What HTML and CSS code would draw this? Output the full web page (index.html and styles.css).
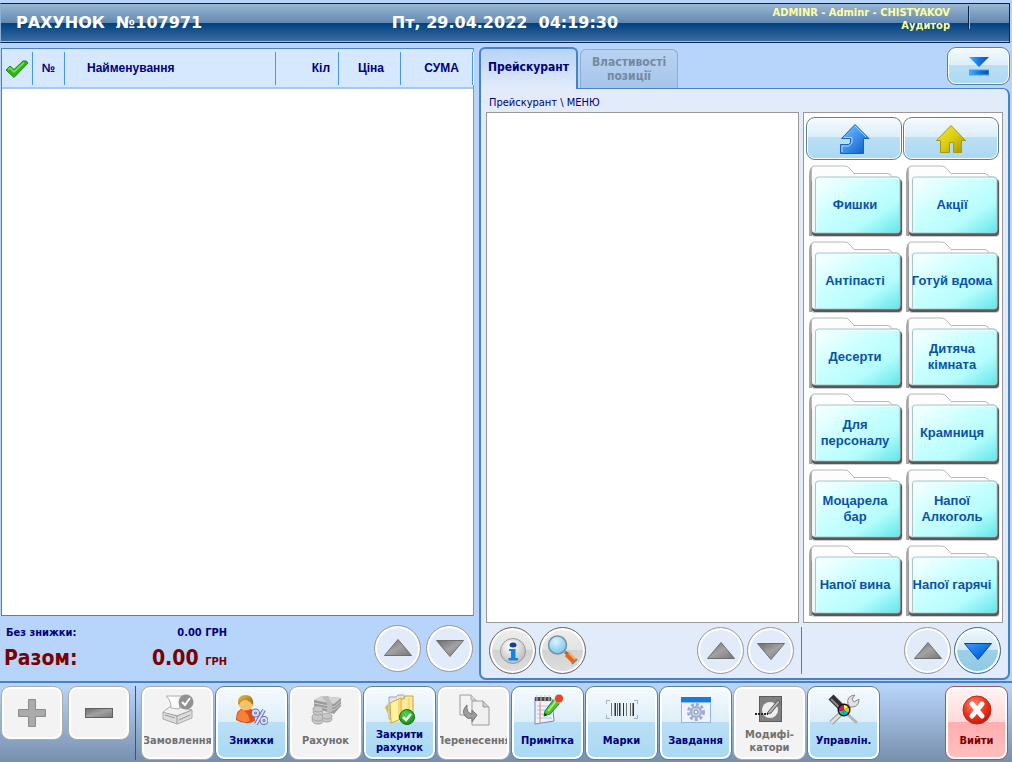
FILE: index.html
```
<!DOCTYPE html>
<html lang="uk">
<head>
<meta charset="utf-8">
<title>Рахунок №107971</title>
<link rel="stylesheet" href="styles.css">
</head>
<body>
<svg class="sprite" aria-hidden="true">
  <defs>
    <linearGradient id="g-gray" x1="0" y1="0" x2="1" y2="1"><stop offset="0" stop-color="#6c6c6c"/><stop offset=".5" stop-color="#a2a2a2"/><stop offset="1" stop-color="#777"/></linearGradient>
    <linearGradient id="g-blue" x1="0" y1="0" x2="1" y2="1"><stop offset="0" stop-color="#3a9cf6"/><stop offset=".6" stop-color="#0b6fe0"/><stop offset="1" stop-color="#0a4fb8"/></linearGradient>
    <linearGradient id="g-bar" x1="0" y1="0" x2="1" y2="0"><stop offset="0" stop-color="#49b4fb"/><stop offset=".5" stop-color="#1178e8"/><stop offset="1" stop-color="#064fc0"/></linearGradient>
    <linearGradient id="g-up" x1="0" y1="0" x2="1" y2="1"><stop offset="0" stop-color="#8cc6ff"/><stop offset=".5" stop-color="#3d92ee"/><stop offset="1" stop-color="#0b55bd"/></linearGradient>
    <linearGradient id="g-home" x1="0" y1="0" x2="1" y2="1"><stop offset="0" stop-color="#f2ea3c"/><stop offset=".5" stop-color="#dccd12"/><stop offset="1" stop-color="#a39300"/></linearGradient>
    <linearGradient id="g-folder" x1="0" y1="0" x2="1" y2="1"><stop offset="0" stop-color="#fff"/><stop offset=".4" stop-color="#ccffff"/><stop offset=".7" stop-color="#b6fdfd"/><stop offset="1" stop-color="#5fe6ea"/></linearGradient>
    <radialGradient id="g-red" cx=".4" cy=".3" r=".8"><stop offset="0" stop-color="#ff8a72"/><stop offset=".5" stop-color="#ee3a22"/><stop offset="1" stop-color="#b90f05"/></radialGradient>
    <radialGradient id="g-green" cx=".4" cy=".3" r=".8"><stop offset="0" stop-color="#5fd050"/><stop offset="1" stop-color="#0b8a14"/></radialGradient>
    <radialGradient id="g-ball" cx=".4" cy=".3" r=".8"><stop offset="0" stop-color="#fff"/><stop offset="1" stop-color="#b4b4b4"/></radialGradient>
    <radialGradient id="g-glass" cx=".4" cy=".3" r=".8"><stop offset="0" stop-color="#d8f5ff"/><stop offset="1" stop-color="#6fbfe6"/></radialGradient>
    <linearGradient id="g-hair" x1="0" y1="0" x2="1" y2="1"><stop offset="0" stop-color="#e8b840"/><stop offset="1" stop-color="#9a6a10"/></linearGradient>
  </defs>
  <symbol id="up" viewBox="0 0 30 20"><path d="M15 1.500 28.500 17.500H1.500Z" fill="url(#g-gray)" stroke="#6d6d6d"/></symbol>
  <symbol id="down" viewBox="0 0 30 20"><path d="M1.500 2.500H28.500L15 18.500Z" fill="url(#g-gray)" stroke="#6d6d6d"/></symbol>
  <symbol id="down-blue" viewBox="0 0 30 20"><path d="M1.500 2.500H28.500L15 18.500Z" fill="url(#g-blue)" stroke="#0a3fa6"/></symbol>
  <symbol id="folder" viewBox="0 0 94 73">
    <path d="M0 71V12Q0 2 3 2V71Z" fill="#a8a8a8"/>
    <path d="M2.500 69V4Q2.500 1 5 1H36Q39 1 41 4L45 8.500H79Q82 9 83 12H88V68Z" fill="#fdfdfd" stroke="#b8b8b8"/>
    <rect x="2" y="14" width="91.500" height="58" rx="4" fill="#000" opacity=".2"/>
    <rect x="3" y="14" width="90" height="57" rx="4" fill="#444" opacity=".85"/>
    <path d="M3 12V65Q3 68 6 68H12V12Z" fill="#f6f8f8"/>
    <path d="M9 12H88Q91 12 91 15V65Q91 68 88 68H5Q7 67 6.500 64V15Q6.500 12 9 12Z" fill="url(#g-folder)" stroke="#a9c4c6"/>
    <path d="M8 66V16Q8 13.500 11 13.500H88" fill="none" stroke="#e6ffff"/>
    <path d="M5 68.500H88" stroke="#279d9f"/>
  </symbol>
</svg>

<header class="topbar">
  <h1 class="topbar-title">РАХУНОК&nbsp; №107971</h1>
  <time class="topbar-time">Пт, 29.04.2022&nbsp; 04:19:30</time>
  <div class="topbar-user">ADMINR - Adminr - CHISTYAKOV<br>Аудитор</div>
</header>

<main class="workspace">
  <section class="bill">
    <div class="bill-list">
      <table class="bill-table">
        <thead>
          <tr>
            <th class="col-check"><span class="cell"><svg class="check" viewBox="0 0 24 18" role="img" aria-label="Вибрано"><path d="M1 10 5 6 9 9.500 18 1Q22 0 23 3L9 17.500Z" fill="#2fb51c" stroke="#1c8a12"/><path d="M3 9.500 5 8 9 12 19 2.500" fill="none" stroke="#7fe060" stroke-width="1.500"/></svg></span></th>
            <th class="col-num"><span class="cell">№</span></th>
            <th class="col-name"><span class="cell">Найменування</span></th>
            <th class="col-qty"><span class="cell">Кіл</span></th>
            <th class="col-price"><span class="cell">Ціна</span></th>
            <th class="col-sum"><span class="cell">СУМА</span></th>
          </tr>
        </thead>
      </table>
    </div>
    <div class="totals">
      <dl class="totals-list">
        <dt class="subtotal">Без знижки:</dt><dd class="subtotal">0.00 ГРН</dd>
        <dt class="total">Разом:</dt><dd class="total">0.00 <small class="currency">ГРН</small></dd>
      </dl>
      <button class="round" aria-label="Вгору"><svg class="arrow"><use href="#up"/></svg></button>
      <button class="round" aria-label="Вниз"><svg class="arrow"><use href="#down"/></svg></button>
    </div>
  </section>

  <section class="catalog">
    <div class="tabs">
      <button class="tab tab-active">Прейскурант</button>
      <button class="tab" disabled>Властивості позиції</button>
      <button class="collapse" aria-label="Згорнути"><svg class="collapse-icon" viewBox="0 0 20 20"><path d="M0 1H20L10 11Z" fill="url(#g-bar)"/><rect y="14" width="20" height="5" fill="url(#g-bar)" stroke="#5b9ad8"/></svg></button>
    </div>
    <div class="catalog-panel">
      <div class="crumbs">Прейскурант \ МЕНЮ</div>
      <div class="catalog-body">
        <div class="items"></div>
        <div class="groups">
          <button class="nav" aria-label="Рівень вище"><svg class="nav-icon" viewBox="0 0 32 32"><path d="M17 1.500 31 15.500H25.500V30.500H2.500V21.500H10.500L12.500 19.500V15.500H3.500Z" fill="url(#g-up)" stroke="#1e62b8"/><path d="M17 3 28 14M4 29V23H11L14 20V14.500H6" fill="none" stroke="#a8d6ff"/></svg></button>
          <button class="nav" aria-label="Початок"><svg class="nav-icon" viewBox="0 0 32 32"><path d="M16 2.500 30.500 17.500H26.500V29.500H18.500V19.500H14.500V29.500H5.500V17.500H1.500Z" fill="url(#g-home)" stroke="#a59a10"/></svg></button>
          <button class="folder"><svg class="folder-art"><use href="#folder"/></svg><span class="folder-name">Фишки</span></button>
          <button class="folder"><svg class="folder-art"><use href="#folder"/></svg><span class="folder-name">Акції</span></button>
          <button class="folder"><svg class="folder-art"><use href="#folder"/></svg><span class="folder-name">Антіпасті</span></button>
          <button class="folder"><svg class="folder-art"><use href="#folder"/></svg><span class="folder-name">Готуй вдома</span></button>
          <button class="folder"><svg class="folder-art"><use href="#folder"/></svg><span class="folder-name">Десерти</span></button>
          <button class="folder"><svg class="folder-art"><use href="#folder"/></svg><span class="folder-name">Дитяча<br>кімната</span></button>
          <button class="folder"><svg class="folder-art"><use href="#folder"/></svg><span class="folder-name">Для<br>персоналу</span></button>
          <button class="folder"><svg class="folder-art"><use href="#folder"/></svg><span class="folder-name">Крамниця</span></button>
          <button class="folder"><svg class="folder-art"><use href="#folder"/></svg><span class="folder-name">Моцарела<br>бар</span></button>
          <button class="folder"><svg class="folder-art"><use href="#folder"/></svg><span class="folder-name">Напої<br>Алкоголь</span></button>
          <button class="folder"><svg class="folder-art"><use href="#folder"/></svg><span class="folder-name">Напої вина</span></button>
          <button class="folder"><svg class="folder-art"><use href="#folder"/></svg><span class="folder-name">Напої гарячі</span></button>
        </div>
      </div>
      <div class="catalog-actions">
        <div class="item-actions">
          <button class="round round-gray" aria-label="Інформація"><svg class="round-icon" viewBox="0 0 32 32"><circle cx="16" cy="16" r="12.500" fill="url(#g-ball)" stroke="#999"/><ellipse cx="16" cy="10" rx="3.500" ry="2.500" fill="#123f9c"/><path d="M12 14H18.500V23H21V25.500H11.500V23H14V16H12Z" fill="#1283e8"/></svg></button>
          <button class="round round-gray" aria-label="Пошук"><svg class="round-icon" viewBox="0 0 32 32"><path d="M18 17 22 20" stroke="#777" stroke-width="3"/><path d="M20 19 28 27" stroke="#e86612" stroke-width="6"/><path d="M22 18 29 25" stroke="#ffae5c" stroke-width="2"/><path d="M25 29 30 24" stroke="#9a8478" stroke-width="2"/><circle cx="10.500" cy="10" r="9" fill="url(#g-glass)" stroke="#7890a0" stroke-width="1.500"/></svg></button>
          <span class="spacer"></span>
          <button class="round" aria-label="Товари вгору"><svg class="arrow"><use href="#up"/></svg></button>
          <button class="round" aria-label="Товари вниз"><svg class="arrow"><use href="#down"/></svg></button>
        </div>
        <div class="group-actions">
          <button class="round" aria-label="Групи вгору"><svg class="arrow"><use href="#up"/></svg></button>
          <button class="round round-blue" aria-label="Групи вниз"><svg class="arrow"><use href="#down-blue"/></svg></button>
        </div>
      </div>
    </div>
  </section>
</main>

<footer class="toolbar">
  <button class="tool tool-short" disabled aria-label="Додати"><svg class="tool-icon" viewBox="0 0 32 32"><path d="M12.500 2.500H19.500V12.500H29.500V19.500H19.500V29.500H12.500V19.500H2.500V12.500H12.500Z" fill="#aaa" stroke="#8c8c8c"/></svg></button>
  <button class="tool tool-short" disabled aria-label="Відняти"><svg class="tool-icon" viewBox="0 0 32 32"><rect x="2.500" y="11.500" width="27" height="9" fill="url(#g-gray)" stroke="#606060"/></svg></button>
  <div class="tool-group">
    <button class="tool" disabled><svg class="tool-icon" viewBox="0 0 32 32"><path d="M1 18 9 12 30 16V24L15 30 1 25Z" fill="#dcdcdc" stroke="#aaa"/><path d="M1 18 15 22 30 16M15 22V30M3 21 13 24M17 26 28 21" fill="none" stroke="#999"/><path d="M1.500 18 9 13 28 16 15 21Z" fill="#f0f0f0"/><path d="M4 2H21L17 15 9 14Q9 6 4 2Z" fill="#fafafa" stroke="#b0b0b0"/><circle cx="24" cy="8" r="7.500" fill="#929292"/><path d="M20 8 23 11 28 4" fill="none" stroke="#fff" stroke-width="2"/></svg><span class="tool-name">Замовлення</span></button>
    <button class="tool"><svg class="tool-icon" viewBox="0 0 32 32"><path d="M0 26Q0 15 8 14H13Q19 16 19 27Q10 32 0 26Z" fill="#e04c14"/><path d="M1 25Q1 17 7 15L12 21 14 27Q8 30 1 25Z" fill="#f4803a"/><circle cx="10" cy="9" r="7.500" fill="#fbc06a"/><path d="M2 10Q1 1 10 1Q18 1 17 11Q14 7 10 6Q5 6 3 11Z" fill="url(#g-hair)"/><g fill="none" stroke="#6a6fb0" stroke-width="4"><circle cx="19.500" cy="19" r="2.500"/><circle cx="28" cy="26.500" r="2.500"/><path d="M28 16 20 30"/></g><g fill="none" stroke="#d8e0fc" stroke-width="2"><circle cx="19.500" cy="19" r="2.500"/><circle cx="28" cy="26.500" r="2.500"/><path d="M28 16 20 30"/></g></svg><span class="tool-name">Знижки</span></button>
    <button class="tool" disabled><svg class="tool-icon" viewBox="0 0 32 32"><path d="M4 6 12 2 31 4V12L24 20 4 14Z" fill="#9b9b9b"/><path d="M4 6 12 2 31 4 24 10Z" fill="#d4d4d4"/><path d="M4 9 24 13 31 7M4 12 24 16 31 10" fill="none" stroke="#ccc"/><path d="M12 3 17 9V18H22V10L18 2Z" fill="#bcbcbc"/><g fill="#c8c8c8" stroke="#a4a4a4"><ellipse cx="8" cy="26" rx="6" ry="4"/><ellipse cx="8" cy="23" rx="6" ry="4"/><ellipse cx="8" cy="18" rx="5" ry="3"/><ellipse cx="8" cy="15" rx="5" ry="3"/><ellipse cx="17" cy="25" rx="5" ry="3"/><ellipse cx="17" cy="22" rx="5" ry="3"/></g></svg><span class="tool-name">Рахунок</span></button>
    <button class="tool"><svg class="tool-icon" viewBox="0 0 32 32"><path d="M5 3H12L14 1H20V25H5Z" fill="#dfe6ee" stroke="#9aa8b4"/><path d="M1 13 4 10V20Z" fill="#e8b828"/><path d="M16 5H20L21 2H29V25H12V6Z" fill="#fbe9a0" stroke="#cfa52c"/><path d="M6 9 17 4V25L7 29Z" fill="#fff3a4" stroke="#d9a91c"/><path d="M15 6V25M25 4V22" stroke="#f6dc70" stroke-width="2"/><circle cx="23" cy="23" r="7.500" fill="url(#g-green)" stroke="#0b7512"/><path d="M19 23 22 26 27 20" fill="none" stroke="#fff" stroke-width="2.500"/></svg><span class="tool-name">Закрити<br>рахунок</span></button>
    <button class="tool" disabled><svg class="tool-icon" viewBox="0 0 32 32"><path d="M2 1H13L18 6V21H2Z" fill="#f3f3f3" stroke="#9c9c9c"/><path d="M13 1V6H18" fill="#ddd" stroke="#aaa"/><path d="M14 7H25L31 13V31H14Z" fill="#f0f0f0" stroke="#9c9c9c"/><path d="M25 7V13H31" fill="#ccc" stroke="#9c9c9c"/><path d="M9 11Q3 17 7 22Q10 26 14 24V28L19 21 14 16V20Q8 19 9 11Z" fill="#9d9d9d" stroke="#777"/></svg><span class="tool-name">Перенесення</span></button>
    <button class="tool"><svg class="tool-icon" viewBox="0 0 32 32"><path d="M3 4 20 5 22 27 3 30Z" fill="#eef3ff" stroke="#7c86c8"/><path d="M5 12H20M5 16H20M5 20H20M5 24H20" stroke="#a8c8f0"/><path d="M8 8V29" stroke="#f08060"/><path d="M3 3H19V7H3Z" fill="#4a4a4a"/><path d="M5 1V8M9 1V8M13 1V8M17 1V8" stroke="#c8c8c8"/><path d="M13 17 22 5 28 9 18 20 12 22Z" fill="#55c330" stroke="#24821a"/><path d="M16 17 24 7" stroke="#a4f080" stroke-width="2"/><path d="M21 6 23 3 30 7 28 10Z" fill="#ccc"/><circle cx="27" cy="4.500" r="4" fill="#e44628"/><path d="M12 22 13 19 15 21Z" fill="#222"/></svg><span class="tool-name">Примітка</span></button>
    <button class="tool"><svg class="tool-icon" viewBox="0 0 32 32"><path d="M4 6.500H.500V10M28 6.500H31.500V10M4 24.500H.500V21M28 24.500H31.500V21" fill="none" stroke="#a4b0b6"/><path d="M5.500 9V22M20.500 9V22" stroke="#777"/><path d="M9.500 9V22M13.500 9V22M17.500 9V22M27.500 9V22" stroke="#333"/><path d="M8.500 9V22M14.500 9V22M26.500 9V22" stroke="#8a8f92"/><path d="M11.500 9V22M24.500 9V22" stroke="#666"/></svg><span class="tool-name">Марки</span></button>
    <button class="tool"><svg class="tool-icon" viewBox="0 0 32 32"><rect x="1.500" y="3.500" width="29" height="25" fill="#eef3fc" stroke="#94b8e0"/><rect x="1" y="3" width="30" height="5" fill="#1c78dc"/><path d="M1 8.500H31" stroke="#82c0ff"/><circle cx="16" cy="18" r="7.500" fill="none" stroke="#a0acd0" stroke-width="3" stroke-dasharray="3 2"/><circle cx="16" cy="18" r="5" fill="#cad4ec" stroke="#a0accc" stroke-width="2"/><circle cx="16" cy="18" r="2" fill="#fff" stroke="#7888b0"/></svg><span class="tool-name">Завдання</span></button>
    <button class="tool" disabled><svg class="tool-icon" viewBox="0 0 32 32"><rect x="5.500" y="2.500" width="22" height="25" fill="#808080" stroke="#5c5c5c"/><circle cx="16" cy="16" r="8" fill="#eee"/><path d="M14 18 24 6 26 8 17 19 13 20Z" fill="#b5b5b5" stroke="#555"/><path d="M1 20H14" stroke="#222" stroke-width="2" stroke-dasharray="2 1"/></svg><span class="tool-name">Модифі-<br>катори</span></button>
    <button class="tool"><svg class="tool-icon" viewBox="0 0 32 32"><path d="M3 29 22 11" stroke="#989898" stroke-width="5"/><path d="M3 29 22 11" stroke="#e0e0e0" stroke-width="3"/><path d="M20 10Q18 2 27 1L24 5 26 8 31 5Q31 14 22 13Z" fill="#e2e2e2" stroke="#888"/><path d="M16 17 29 29" stroke="#b4b4b4" stroke-width="3"/><path d="M3 3 14 14" stroke="#303030" stroke-width="7"/><path d="M3 5 12 14" stroke="#888" stroke-width="2"/><circle cx="16" cy="16" r="6.500" fill="#111"/><path d="M16 16V11A5 5 0 0 1 20 13Z" fill="#ff0"/><path d="M16 16 20 13A5 5 0 0 1 20 19Z" fill="#f8b800"/><path d="M16 16 20 19A5 5 0 0 1 15 21Z" fill="#00b8ff"/><path d="M16 16 15 21A5 5 0 0 1 11 17Z" fill="#18d060"/><path d="M16 16 11 17A5 5 0 0 1 16 11Z" fill="#f00080"/></svg><span class="tool-name">Управлін.</span></button>
  </div>
  <button class="tool tool-exit"><svg class="tool-icon" viewBox="0 0 32 32"><circle cx="16" cy="16" r="14" fill="url(#g-red)" stroke="#b82b1c"/><path d="M11 10 21 22M21 10 11 22" stroke="#fff" stroke-width="5" stroke-linecap="round"/></svg><span class="tool-name">Вийти</span></button>
</footer>
</body>
</html>
```

FILE: styles.css
```
* { box-sizing: border-box; }

body {
  margin: 0;
  min-height: 100vh;
  display: flex;
  flex-direction: column;
  background: #b7d5fb;
  color: #00007b;
  font-family: "DejaVu Sans Condensed", "DejaVu Sans", sans-serif;
  font-size: 11px;
  font-weight: bold;
}

button {
  margin: 0;
  padding: 0;
  border: 0;
  background: none;
  font: inherit;
  color: inherit;
}

svg { display: block; flex: none; }

.sprite { position: absolute; width: 0; height: 0; }

/* Title bar */
.topbar {
  display: grid;
  grid-template-columns: 1fr auto 1fr;
  margin: 3px 2px 4px 0;
  padding: 0 15px;
  height: 40px;
  border: 1px solid #06264e;
  border-left-color: #8fb0d4;
  background: linear-gradient(#9bb7d3, #6288b0 19px, #00407e 19px, #3a6ba3 37px, #a0bde0 37px);
  color: #fff;
}

.topbar-title,
.topbar-time {
  margin: 0;
  font: bold 16px/38px "DejaVu Sans", sans-serif;
  white-space: nowrap;
}

.topbar-user {
  justify-self: end;
  align-self: start;
  margin: 2px 25px 0 0;
  padding-right: 18px;
  height: 23px;
  border-right: 1px solid #06264e;
  box-shadow: 1px 0 #8fb9ea;
  color: #ffff9c;
  font-size: 11px;
  line-height: 13px;
  text-align: right;
}

/* Work area */
.workspace {
  flex: 1;
  display: grid;
  grid-template-columns: 474fr 531fr;
  gap: 5px;
  padding: 0 2px 1px 0;
}

.bill { display: flex; flex-direction: column; }

.bill-list {
  flex: 1;
  margin: 1px 0 0 1px;
  border: 1px solid #4a80c4;
  border-right-color: #8b97a8;
  background: #fff;
}

.bill-table {
  width: 100%;
  table-layout: fixed;
  border-collapse: collapse;
  font: bold 12px/33px "Liberation Sans", sans-serif;
}

.bill-table th {
  padding: 3px 0 2px;
  background: #d6e8fd;
  border-bottom: 2px solid #a3c8f3;
  text-align: right;
}

.cell {
  display: block;
  height: 33px;
  padding-right: 8px;
  border-right: 1px solid #4a97e6;
  box-shadow: 1px 0 #fff;
}

.col-check { width: 31px; }
.col-num { width: 32px; }
.col-qty { width: 63px; }
.col-price { width: 62px; }
.col-sum { width: 72px; }
.col-check .cell { display: flex; align-items: center; padding: 0 0 0 3px; }
.col-num .cell { padding: 0; text-align: center; }
.col-name .cell { padding-left: 22px; text-align: left; }
.col-price .cell { padding-right: 16px; }
.col-sum .cell { padding-right: 13px; }
.check { width: 24px; height: 18px; }

.totals {
  display: flex;
  align-items: center;
  gap: 5px;
  height: 64px;
  padding: 0 1px 0 4px;
}

.totals-list {
  display: grid;
  grid-template-columns: auto auto;
  align-items: baseline;
  width: 223px;
  margin: 0 auto 0 0;
  padding-top: 3px;
}

.totals-list dd { margin: 0; text-align: right; }
.subtotal { line-height: 20px; }
dt.subtotal { padding-left: 2px; }
.total { color: #7b0000; font-size: 21px; line-height: 31px; }
.currency { font-size: 11px; }

/* Round buttons */
.round {
  display: grid;
  place-items: center;
  flex: none;
  width: 47px;
  height: 47px;
  border: 1px solid #999;
  border-radius: 50%;
  background: #e2ebfa;
  box-shadow: inset 0 0 0 2px #fff;
}

.round-gray { border-color: #666; background: linear-gradient(#eee, #e2e2e2 50%, #d2d2d2 50%, #dedede); }
.round-blue { border-color: #3c6880; background: linear-gradient(#f0f8fc, #d0e8f4 50%, #9cd0e8 50%, #90c8e4); }
.arrow { width: 30px; height: 20px; }
.round-icon { width: 32px; height: 32px; }

/* Catalog */
.catalog { display: flex; flex-direction: column; }
.tabs { display: flex; align-items: flex-end; height: 41px; }

.tab {
  width: 98px;
  height: 39px;
  margin-left: 2px;
  border: 1px solid #8cacd2;
  border-bottom: 0;
  border-radius: 6px 6px 0 0;
  background: linear-gradient(#b9d3f2, #a6c5ea);
  color: #74899f;
  font-size: 12px;
  line-height: 14px;
}

.tab-active {
  z-index: 1;
  width: 99px;
  height: 42px;
  margin: 0 0 -1px;
  padding-bottom: 5px;
  border: 2px solid #4a80c8;
  border-bottom: 0;
  background: linear-gradient(#b9d3f6, #e2ebfa);
  color: #00007b;
}

.collapse {
  display: grid;
  place-items: center;
  align-self: flex-start;
  margin-left: auto;
  width: 63px;
  height: 38px;
}

.collapse,
.nav {
  border: 1px solid #5a8096;
  border-radius: 9px;
  background: linear-gradient(#f4fafd, #dceef8 47%, #bbdff4 47%, #a9d9f3);
  box-shadow: inset 0 0 0 1px #fff;
}

.collapse-icon { width: 20px; height: 20px; }

.catalog-panel {
  flex: 1;
  display: flex;
  flex-direction: column;
  padding: 5px 5px 4px;
  border: 2px solid #4a80c8;
  border-top-width: 1px;
  border-radius: 0 7px 7px 7px;
  background: #e2ebfa;
}

.crumbs {
  padding: 0 0 1px 3px;
  font-size: 11px;
  font-weight: normal;
  line-height: 17px;
}

.catalog-body { flex: 1; display: flex; gap: 4px; }
.items { flex: 1; border: 1px solid #999; background: #fff; }

.groups {
  display: grid;
  grid-template-columns: 1fr 1fr;
  align-content: start;
  width: 200px;
  padding: 4px 2px 0;
  border: 1px solid #999;
  background: #fff;
}

.nav {
  display: grid;
  place-items: center;
  height: 43px;
  margin: 0 1px 5px 0;
}

.nav-icon { width: 32px; height: 32px; }

.folder {
  display: grid;
  place-items: center;
  height: 76px;
  padding: 0 0 3px 3px;
  color: #0a52a8;
  font: bold 13px/16px "Liberation Sans", sans-serif;
}

.folder-art, .folder-name { grid-area: 1 / 1; }
.folder-art { width: 94px; height: 73px; }
.folder-name { padding: 6px 2px 0 0; white-space: nowrap; }

.catalog-actions { display: flex; padding-top: 4px; }

.item-actions {
  flex: 1;
  display: flex;
  gap: 3px;
  padding: 0 7px 0 3px;
  border-right: 1px solid #777;
}

.spacer { flex: 1; }

.group-actions {
  display: flex;
  justify-content: flex-end;
  gap: 3px;
  width: 201px;
  padding-right: 2px;
}

/* Bottom toolbar */
.toolbar {
  display: flex;
  align-items: flex-start;
  gap: 5px;
  height: 81px;
  padding: 3px 4px 0 1px;
  border-top: 2px solid #4a80c8;
  background: linear-gradient(#b9d6fc, #7890ae);
}

.tool {
  display: flex;
  flex-direction: column;
  align-items: center;
  width: 73px;
  height: 74px;
  padding: 7px 2px 0;
  border: 1px solid #5a8096;
  border-radius: 9px;
  background: linear-gradient(#f6fbfe, #dceef8 49%, #b9dff5 49%, #a9d9f3);
  box-shadow: inset 0 0 0 2px #fff;
}

.tool:disabled {
  border-color: #aaa;
  background: #f3f3f3;
  color: #707070;
}

.tool-short { width: 62px; height: 54px; padding-top: 10px; }
.tool-icon { width: 32px; height: 32px; }

.tool-name {
  display: flex;
  align-items: center;
  justify-content: center;
  width: 100%;
  height: 29px;
  overflow: hidden;
  line-height: 13px;
  white-space: nowrap;
}

.tool-group {
  display: flex;
  gap: 1px;
  padding-left: 5px;
  border-left: 1px solid #1c5ca4;
}

.tool-exit {
  width: 63px;
  margin-left: auto;
  border-color: #a05858;
  background: linear-gradient(#fff4f4, #ffdada 49%, #ffaeae 49%, #ffc0c0);
  color: #7b0000;
}
```
